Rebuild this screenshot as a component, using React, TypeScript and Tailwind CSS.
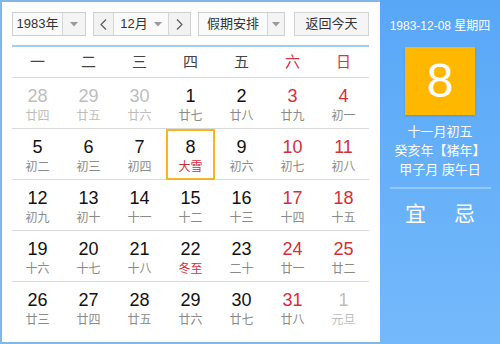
import React from "react";

type Cell = { d: number; l: string; gray?: boolean; red?: boolean; lred?: boolean; sel?: boolean };

const rows: Cell[][] = [
  [
    { d: 28, l: "廿四", gray: true },
    { d: 29, l: "廿五", gray: true },
    { d: 30, l: "廿六", gray: true },
    { d: 1, l: "廿七" },
    { d: 2, l: "廿八" },
    { d: 3, l: "廿九", red: true },
    { d: 4, l: "初一", red: true },
  ],
  [
    { d: 5, l: "初二" },
    { d: 6, l: "初三" },
    { d: 7, l: "初四" },
    { d: 8, l: "大雪", lred: true, sel: true },
    { d: 9, l: "初六" },
    { d: 10, l: "初七", red: true },
    { d: 11, l: "初八", red: true },
  ],
  [
    { d: 12, l: "初九" },
    { d: 13, l: "初十" },
    { d: 14, l: "十一" },
    { d: 15, l: "十二" },
    { d: 16, l: "十三" },
    { d: 17, l: "十四", red: true },
    { d: 18, l: "十五", red: true },
  ],
  [
    { d: 19, l: "十六" },
    { d: 20, l: "十七" },
    { d: 21, l: "十八" },
    { d: 22, l: "冬至", lred: true },
    { d: 23, l: "二十" },
    { d: 24, l: "廿一", red: true },
    { d: 25, l: "廿二", red: true },
  ],
  [
    { d: 26, l: "廿三" },
    { d: 27, l: "廿四" },
    { d: 28, l: "廿五" },
    { d: 29, l: "廿六" },
    { d: 30, l: "廿七" },
    { d: 31, l: "廿八", red: true },
    { d: 1, l: "元旦", gray: true },
  ],
];

const weekdays = ["一", "二", "三", "四", "五", "六", "日"];

function Caret() {
  return (
    <svg width="8" height="5" viewBox="0 0 8 5">
      <path d="M0 0 L8 0 L4 4.5 Z" fill="#9a9a9a" />
    </svg>
  );
}

function Chevron({ dir }: { dir: "l" | "r" }) {
  return (
    <svg width="7" height="11" viewBox="0 0 7 11">
      <polyline
        points={dir === "l" ? "6,0.5 1,5.5 6,10.5" : "1,0.5 6,5.5 1,10.5"}
        fill="none"
        stroke="#555"
        strokeWidth="1.1"
      />
    </svg>
  );
}

export default function App() {
  const font = { fontFamily: '"Liberation Sans", "Noto Sans CJK SC", sans-serif' };
  return (
    <div className="flex w-[500px] h-[344px] bg-white overflow-hidden" style={font}>
      <div className="w-[380px] h-[344px] border-2 border-r-0 border-[#82b8e8] pl-[10px] pr-[11px] pt-[10px]">
        {/* controls */}
        <div className="flex h-[24px] text-[13px] text-[#333]">
          <div className="flex w-[74px] h-[24px] border border-[#cfcfcf] bg-[#fafafa]">
            <div className="w-[50px] flex items-center justify-center border-r border-[#d6d6d6]">1983年</div>
            <div className="flex-1 flex items-center justify-center bg-[#f4f4f4]">
              <Caret />
            </div>
          </div>
          <div className="flex ml-[7px] w-[98px] h-[24px] border border-[#cfcfcf] bg-[#fafafa]">
            <div className="w-[20px] flex items-center justify-center border-r border-[#d6d6d6] bg-[#f2f2f2]">
              <Chevron dir="l" />
            </div>
            <div className="w-[55px] flex items-center justify-center gap-[6px] border-r border-[#d6d6d6]">
              <span>12月</span>
              <Caret />
            </div>
            <div className="flex-1 flex items-center justify-center bg-[#f2f2f2]">
              <Chevron dir="r" />
            </div>
          </div>
          <div className="flex ml-[7px] w-[87px] h-[24px] border border-[#cfcfcf] bg-[#fafafa]">
            <div className="w-[69px] flex items-center justify-center border-r border-[#d6d6d6]">假期安排</div>
            <div className="flex-1 flex items-center justify-center bg-[#f4f4f4]">
              <Caret />
            </div>
          </div>
          <div className="flex ml-[9px] w-[75px] h-[24px] border border-[#d3d3d3] bg-[#f5f5f5] items-center justify-center">
            返回今天
          </div>
        </div>
        <div className="mt-[9px] h-[2px] bg-[#a5cbee]" />
        {/* header */}
        <div className="grid grid-cols-7 h-[31px] border-b border-[#d9d9d9] text-[15px] items-center">
          {weekdays.map((w, i) => (
            <div key={w} className={`text-center ${i >= 5 ? "text-[#d6343f]" : "text-[#444]"}`}>
              {w}
            </div>
          ))}
        </div>
        {rows.map((row, ri) => (
          <div
            key={ri}
            className={`grid grid-cols-7 h-[51px] ${ri < rows.length - 1 ? "border-b border-[#d9d9d9]" : ""}`}
          >
            {row.map((c, ci) => {
              const numColor = c.gray ? "text-[#bdbdbd]" : c.red ? "text-[#d2303c]" : "text-[#111]";
              const lunColor = c.lred ? "text-[#d2303c]" : c.gray ? "text-[#bdbdbd]" : "text-[#8a8a8a]";
              return (
                <div key={ci} className="relative flex flex-col items-center pt-[8px]">
                  {c.sel && (
                    <div className="absolute left-[1px] right-[1px] top-0 bottom-[-1px] border-2 border-[#f4b623]" />
                  )}
                  <div className={`text-[18px] leading-[20px] ${numColor}`}>{c.d}</div>
                  <div className={`text-[12px] leading-[16px] mt-[2px] ${lunColor}`}>{c.l}</div>
                </div>
              );
            })}
          </div>
        ))}
      </div>
      <div className="w-[120px] h-[344px] bg-gradient-to-b from-[#58a7f7] to-[#74b9fb] flex flex-col items-center text-white">
        <div className="mt-[17px] text-[12px] leading-[18px]">1983-12-08 星期四</div>
        <div className="mt-[12px] w-[70px] h-[68px] bg-[#ffb700] shadow-[0_1px_2px_rgba(0,0,0,0.15)] flex items-center justify-center text-[48px] leading-none">
          8
        </div>
        <div className="mt-[7px] text-[13px] leading-[19px] text-center">
          <div>十一月初五</div>
          <div>癸亥年【猪年】</div>
          <div>甲子月 庚午日</div>
        </div>
        <div className="mt-[8px] w-[101px] h-[2px] bg-[#95c9fb]" />
        <div className="mt-[12px] flex gap-[28px] text-[21px] leading-[26px]">
          <span>宜</span>
          <span>忌</span>
        </div>
      </div>
    </div>
  );
}
